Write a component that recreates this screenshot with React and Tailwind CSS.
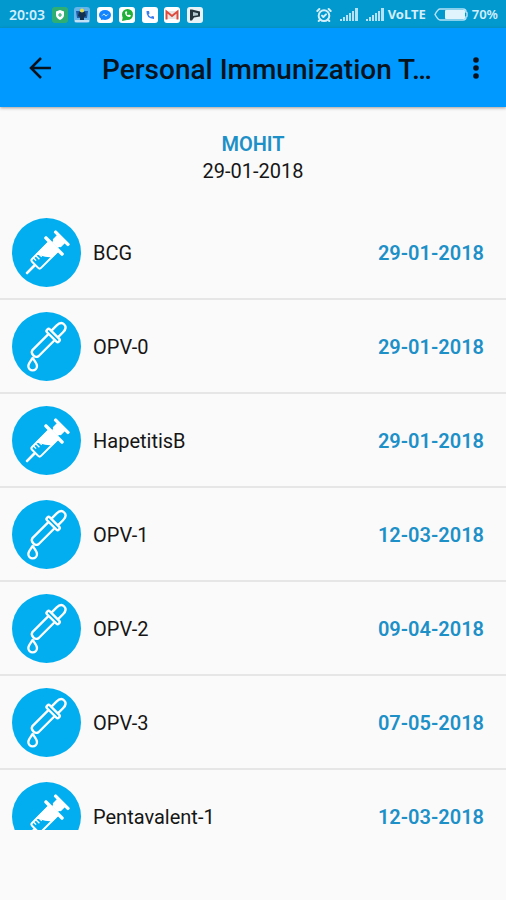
import { AlarmClockCheck } from "lucide-react";

const VACCINES = [
  { name: "BCG", date: "29-01-2018", kind: "injection" },
  { name: "OPV-0", date: "29-01-2018", kind: "oral" },
  { name: "HapetitisB", date: "29-01-2018", kind: "injection" },
  { name: "OPV-1", date: "12-03-2018", kind: "oral" },
  { name: "OPV-2", date: "09-04-2018", kind: "oral" },
  { name: "OPV-3", date: "07-05-2018", kind: "oral" },
  { name: "Pentavalent-1", date: "12-03-2018", kind: "injection" },
];

function SyringeIcon() {
  return (
    <svg viewBox="0 0 207 207" className="size-[69px] shrink-0" aria-hidden="true">
      <circle cx="103.5" cy="103.5" r="103.5" fill="#02aeef" />
      <g transform="translate(44 166) rotate(-45)" fill="#fff">
        <rect x="-2" y="-4" width="38" height="8" rx="3" />
        <path
          d="M42 -19 H112 V19 H42 Q36 19 36 13 V-13 Q36 -19 42 -19 Z"
          fill="none"
          stroke="#fff"
          strokeWidth="6"
        />
        <path d="M60 -21 H114 V21 H88 L74 4 Z" />
        <path d="M47 -19 v12 M57 -19 v16 M67 -19 v16" stroke="#fff" strokeWidth="4" />
        <rect x="111" y="-39" width="10" height="78" rx="4" />
        <path d="M120 -12 Q126 -12 128 -17 H148 V17 H128 Q126 12 120 12 Z" />
        <rect x="144" y="-31" width="10" height="62" rx="4" />
      </g>
    </svg>
  );
}

function DropperIcon() {
  return (
    <svg viewBox="0 0 207 207" className="size-[69px] shrink-0" aria-hidden="true">
      <circle cx="103.5" cy="103.5" r="103.5" fill="#02aeef" />
      <g fill="none" stroke="#fff" strokeWidth="7" strokeLinejoin="round">
        <g transform="translate(64 130) rotate(-45)">
          <path d="M79 -13 H9 Q0 -11 0 0 Q0 11 9 13 H79" />
          <rect x="78" y="-25" width="12" height="50" rx="5" />
          <path d="M90 -14 H112 Q131 -14 131 0 Q131 14 112 14 H90" />
        </g>
        <path d="M62 138 C56 147 49 154 49 162 A13 13 0 0 0 75 162 C75 154 68 147 62 138 Z" />
      </g>
    </svg>
  );
}

function SignalIcon() {
  return (
    <svg viewBox="0 0 18 13" className="h-[13px] w-[18px]" fill="#b5e2f6" aria-hidden="true">
      <path d="M0 11h2v2H0zM3 9h2v4H3zM6 7h2v6H6zM9 5h2v8H9zM12 3h2v10h-2zM15 0h3v13h-3z" />
    </svg>
  );
}

function BatteryIcon() {
  return (
    <svg viewBox="0 0 34 13" className="h-[13px] w-[34px]" aria-hidden="true">
      <path
        d="M6 1H29Q32 1 32 4Q33 4 33 5V8Q33 9 32 9Q32 12 29 12H6Q4 12 1 6.5Q4 1 6 1Z"
        fill="none"
        stroke="#b5e2f6"
        strokeWidth="1.5"
      />
      <rect x="11" y="2" width="20" height="9" rx="1" fill="#e0f4fd" />
    </svg>
  );
}

function NotificationIcons() {
  return (
    <div className="flex w-[151px] justify-between">
      <svg viewBox="0 0 16 16" className="size-4" aria-hidden="true">
        <rect width="16" height="16" rx="3" fill="#2fae74" />
        <path d="M8 3l4 1.5v3.5q0 3-4 5-4-2-4-5V4.5z" fill="#fff" />
        <path d="M8 6v4M6 8h4" stroke="#2fae74" strokeWidth="1.2" />
      </svg>
      <svg viewBox="0 0 16 16" className="size-4" aria-hidden="true">
        <rect width="16" height="16" rx="3" fill="#63b4e8" />
        <path d="M2 4h4v7H3zM10 4h4l-1 7h-3z" fill="#1c5ea8" />
        <path d="M5 5h6l1 4-2 1v3H6v-3L4 9z" fill="#12324f" />
        <circle cx="8" cy="3.5" r="2" fill="#e8dc4a" />
        <path d="M1 13h14v2H1z" fill="#c4e2f5" />
      </svg>
      <svg viewBox="0 0 16 16" className="size-4" aria-hidden="true">
        <rect width="16" height="16" rx="3" fill="#fff" />
        <ellipse cx="8" cy="8" rx="6" ry="5" fill="#1384ff" />
        <path d="M4 13v-3l3 2z" fill="#1384ff" />
        <path d="M4 9.5l3-3 2 2 3-2-3 3-2-2z" fill="#fff" />
      </svg>
      <svg viewBox="0 0 16 16" className="size-4" aria-hidden="true">
        <rect width="16" height="16" rx="3" fill="#fff" />
        <circle cx="8.5" cy="7.5" r="5.5" fill="#20b038" />
        <path d="M3 14l1-5 4 4z" fill="#20b038" />
        <path d="M6 5q0 5 5 5l1-1.5-2-1-1 .7q-1-.4-1.4-1.5l.7-.8-.8-2z" fill="#fff" />
      </svg>
      <svg viewBox="0 0 16 16" className="size-4" aria-hidden="true">
        <rect width="16" height="16" rx="3" fill="#fff" />
        <path d="M4.5 4q-.5 7.500 7.500 8v-2.500l-2-.5-1 1q-2-1-2.500-2.500l1-1L7 4z" fill="#3b7df0" />
      </svg>
      <svg viewBox="0 0 16 16" className="size-4" aria-hidden="true">
        <rect width="16" height="16" rx="3" fill="#fff" />
        <path d="M3 4h10v8H3z" fill="#e9e4e4" />
        <path d="M2.5 12.5v-8L8 9l5.5-4.5v8" fill="none" stroke="#dd4b3e" strokeWidth="2" />
      </svg>
      <svg viewBox="0 0 16 16" className="size-4" aria-hidden="true">
        <rect width="16" height="16" rx="3" fill="#e8f3f7" />
        <path d="M3 2.5h2l8 2v5l-6 1-2 3H3z" fill="#27363d" />
        <path d="M6 5l5 1.2v2L6 9z" fill="#b5c9d1" />
      </svg>
    </div>
  );
}

function StatusBar() {
  return (
    <div className="flex h-7 items-center justify-between bg-[#0299cf] pt-px pr-2 pl-[9px] font-['Noto_Sans',sans-serif] font-semibold text-[#d3effb]">
      <div className="flex items-center gap-[7px] text-sm">
        <span>20:03</span>
        <NotificationIcons />
      </div>
      <div className="flex items-center text-[13px]">
        <AlarmClockCheck className="mr-2 size-4" strokeWidth={3} />
        <span className="mr-2"><SignalIcon /></span>
        <span className="mr-1"><SignalIcon /></span>
        <span className="mr-2 font-bold">VoLTE</span>
        <span className="mr-1"><BatteryIcon /></span>
        <span>70%</span>
      </div>
    </div>
  );
}

function AppBar() {
  return (
    <header className="z-10 flex h-[79px] shrink-0 items-center bg-[#0099ff] pr-4 pl-6 text-[#06121c] shadow-[0_1px_3px_rgba(60,40,30,0.45)]">
      <button type="button" aria-label="Back" className="flex size-8 items-center justify-center">
        <svg viewBox="0 0 24 24" className="size-6" fill="none" stroke="currentColor" strokeWidth="2.5" aria-hidden="true">
          <path d="M23 12H3M13 2L3 12L13 22" />
        </svg>
      </button>
      <h1 className="ml-[46px] flex-1 truncate pt-1 text-[28px] font-medium">
        Personal Immunization T…
      </h1>
      <button type="button" aria-label="More options" className="flex size-7 items-center justify-center">
        <svg viewBox="0 0 8 24" className="h-6 w-2" fill="currentColor" aria-hidden="true">
          <circle cx="4" cy="4" r="2.8" />
          <circle cx="4" cy="12" r="2.8" />
          <circle cx="4" cy="20" r="2.8" />
        </svg>
      </button>
    </header>
  );
}

function VaccineRow({ name, date, kind }) {
  return (
    <li className="flex h-[94px] items-center border-b-2 border-[#e6e6e6] pr-[22px] pl-3">
      {kind === "oral" ? <DropperIcon /> : <SyringeIcon />}
      <span className="ml-3 flex-1 pt-0.5 text-xl text-[#161616]">{name}</span>
      <time className="pt-0.5 text-xl font-semibold text-[#1e90c8]">{date}</time>
    </li>
  );
}

export default function App() {
  return (
    <div className="flex h-screen flex-col bg-[#fafafa] font-[Roboto,sans-serif]">
      <StatusBar />
      <AppBar />
      <section className="pt-6 pb-[21px] text-center text-xl leading-[27px]">
        <h2 className="font-semibold text-[#1e90c8]">MOHIT</h2>
        <p className="text-[#161616]">29-01-2018</p>
      </section>
      <ul className="min-h-0 flex-1 overflow-hidden">
        {VACCINES.map((v) => (
          <VaccineRow key={v.name} {...v} />
        ))}
      </ul>
      <footer className="h-[70px] shrink-0" />
    </div>
  );
}
